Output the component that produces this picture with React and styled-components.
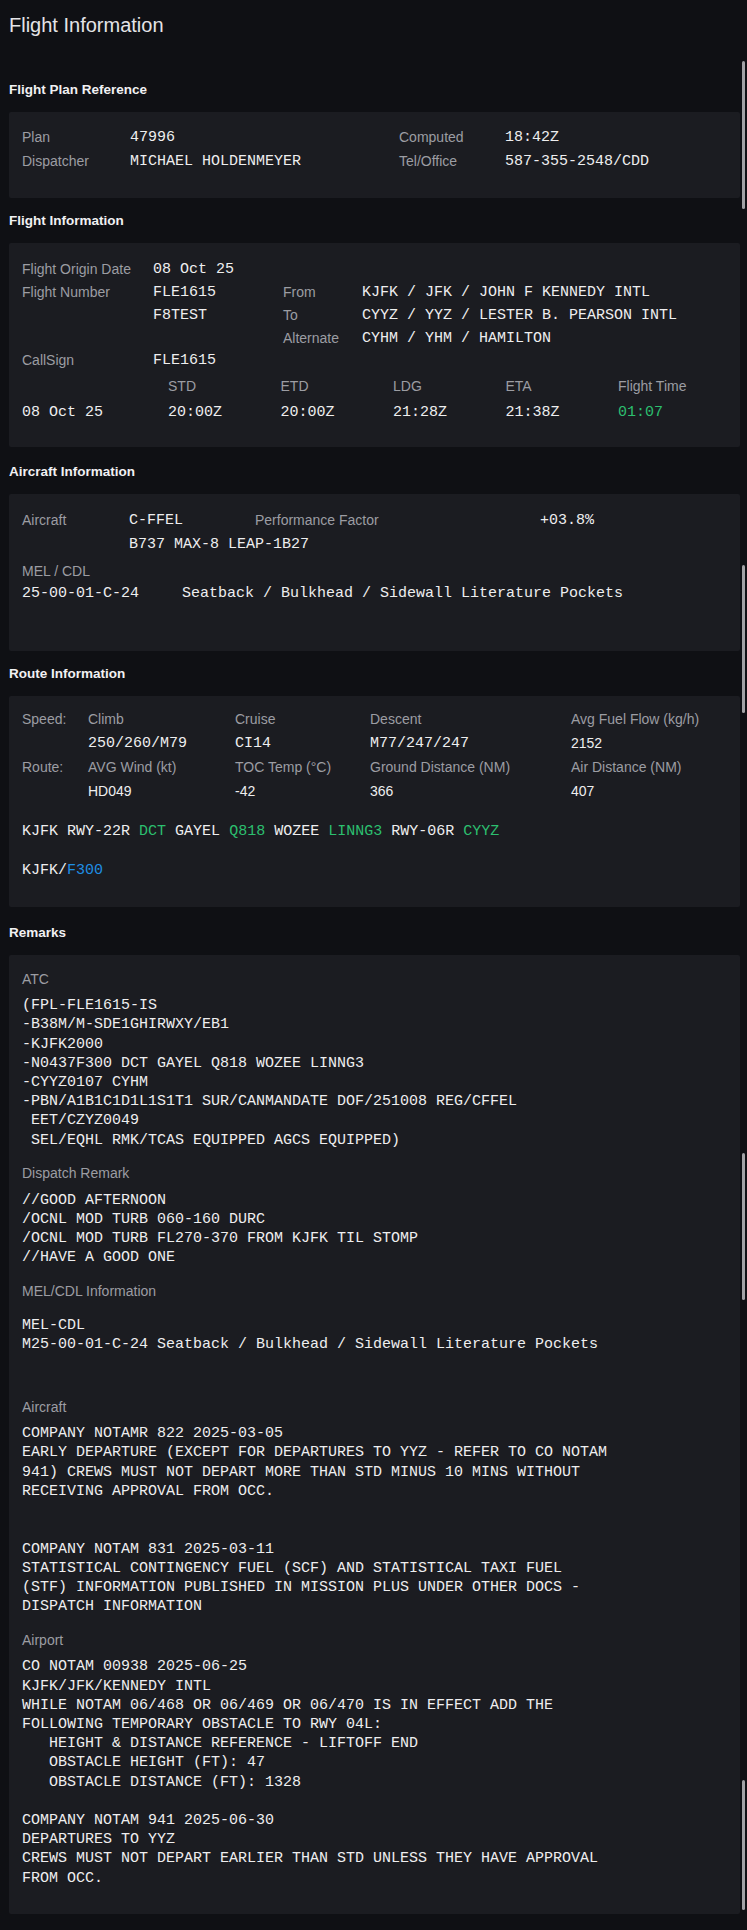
import React from "react";
import styled, { createGlobalStyle } from "styled-components";

const SANS = `"Liberation Sans", Arial, sans-serif`;
const MONO = `"Liberation Mono", "DejaVu Sans Mono", monospace`;

const GlobalStyle = createGlobalStyle`
  html, body {
    margin: 0;
    background: #0f1014;
  }
`;

const atcText = `(FPL-FLE1615-IS
-B38M/M-SDE1GHIRWXY/EB1
-KJFK2000
-N0437F300 DCT GAYEL Q818 WOZEE LINNG3
-CYYZ0107 CYHM
-PBN/A1B1C1D1L1S1T1 SUR/CANMANDATE DOF/251008 REG/CFFEL
 EET/CZYZ0049
 SEL/EQHL RMK/TCAS EQUIPPED AGCS EQUIPPED)`;

const dispatchText = `//GOOD AFTERNOON
/OCNL MOD TURB 060-160 DURC
/OCNL MOD TURB FL270-370 FROM KJFK TIL STOMP
//HAVE A GOOD ONE`;

const melText = `MEL-CDL
M25-00-01-C-24 Seatback / Bulkhead / Sidewall Literature Pockets`;

const aircraftText = `COMPANY NOTAMR 822 2025-03-05
EARLY DEPARTURE (EXCEPT FOR DEPARTURES TO YYZ - REFER TO CO NOTAM
941) CREWS MUST NOT DEPART MORE THAN STD MINUS 10 MINS WITHOUT
RECEIVING APPROVAL FROM OCC.


COMPANY NOTAM 831 2025-03-11
STATISTICAL CONTINGENCY FUEL (SCF) AND STATISTICAL TAXI FUEL
(STF) INFORMATION PUBLISHED IN MISSION PLUS UNDER OTHER DOCS -
DISPATCH INFORMATION`;

const airportText = `CO NOTAM 00938 2025-06-25
KJFK/JFK/KENNEDY INTL
WHILE NOTAM 06/468 OR 06/469 OR 06/470 IS IN EFFECT ADD THE
FOLLOWING TEMPORARY OBSTACLE TO RWY 04L:
   HEIGHT & DISTANCE REFERENCE - LIFTOFF END
   OBSTACLE HEIGHT (FT): 47
   OBSTACLE DISTANCE (FT): 1328

COMPANY NOTAM 941 2025-06-30
DEPARTURES TO YYZ
CREWS MUST NOT DEPART EARLIER THAN STD UNLESS THEY HAVE APPROVAL
FROM OCC.`;

const route = [
  ["KJFK", "plain"],
  ["RWY-22R", "plain"],
  ["DCT", "green"],
  ["GAYEL", "plain"],
  ["Q818", "green"],
  ["WOZEE", "plain"],
  ["LINNG3", "green"],
  ["RWY-06R", "plain"],
  ["CYYZ", "green"],
];

const times = [
  ["STD", "20:00Z"],
  ["ETD", "20:00Z"],
  ["LDG", "21:28Z"],
  ["ETA", "21:38Z"],
  ["Flight Time", "01:07"],
];

// scrollbar thumbs captured in the screenshot
const thumbs = [
  [61, 148],
  [565, 148],
  [1153, 147],
  [1780, 130],
];

const App = () => {
  return (
    <Page>
      <GlobalStyle />
      <Title>Flight Information</Title>

      <Section $top={43}>
        <Heading>Flight Plan Reference</Heading>
        <Card $pad="13px 13px 25px">
          <PlanGrid>
            <Label>Plan</Label>
            <Value>47996</Value>
            <Label>Computed</Label>
            <Value>18:42Z</Value>
            <Label>Dispatcher</Label>
            <Value>MICHAEL HOLDENMEYER</Value>
            <Label>Tel/Office</Label>
            <Value>587-355-2548/CDD</Value>
          </PlanGrid>
        </Card>
      </Section>

      <Section $top={13}>
        <Heading>Flight Information</Heading>
        <Card $pad="15px 13px 22px">
          <InfoGrid>
            <Label>Flight Origin Date</Label>
            <Value>08 Oct 25</Value>
            <span />
            <span />
            <Label>Flight Number</Label>
            <Value>FLE1615</Value>
            <Label>From</Label>
            <Value>KJFK / JFK / JOHN F KENNEDY INTL</Value>
            <span />
            <Value>F8TEST</Value>
            <Label>To</Label>
            <Value>CYYZ / YYZ / LESTER B. PEARSON INTL</Value>
            <span />
            <span />
            <Label>Alternate</Label>
            <Value>CYHM / YHM / HAMILTON</Value>
            <Label>CallSign</Label>
            <Value>FLE1615</Value>
          </InfoGrid>
          <TimeGrid>
            <span />
            {times.map(([l]) => (
              <Label key={l}>{l}</Label>
            ))}
            <Value>08 Oct 25</Value>
            {times.map(([l, v]) => (
              <Value key={l} $tone={l === "Flight Time" ? "green" : "plain"}>
                {v}
              </Value>
            ))}
          </TimeGrid>
        </Card>
      </Section>

      <Section $top={15}>
        <Heading>Aircraft Information</Heading>
        <Card $pad="14px 13px 47px">
          <AircraftGrid>
            <Label>Aircraft</Label>
            <Value>C-FFEL</Value>
            <Label>Performance Factor</Label>
            <Value>+03.8%</Value>
            <span />
            <Value>B737 MAX-8 LEAP-1B27</Value>
          </AircraftGrid>
          <SubLabel>MEL / CDL</SubLabel>
          <MelRow>
            <Value>25-00-01-C-24</Value>
            <Value>Seatback / Bulkhead / Sidewall Literature Pockets</Value>
          </MelRow>
        </Card>
      </Section>

      <Section $top={13}>
        <Heading>Route Information</Heading>
        <Card $pad="11px 13px 26px">
          <RouteGrid>
            <Label>Speed:</Label>
            <Label>Climb</Label>
            <Label>Cruise</Label>
            <Label>Descent</Label>
            <Label>Avg Fuel Flow (kg/h)</Label>
            <span />
            <Value>250/260/M79</Value>
            <Value>CI14</Value>
            <Value>M77/247/247</Value>
            <SansValue>2152</SansValue>
            <Label>Route:</Label>
            <Label>AVG Wind (kt)</Label>
            <Label>TOC Temp (°C)</Label>
            <Label>Ground Distance (NM)</Label>
            <Label>Air Distance (NM)</Label>
            <span />
            <SansValue>HD049</SansValue>
            <SansValue>-42</SansValue>
            <SansValue>366</SansValue>
            <SansValue>407</SansValue>
          </RouteGrid>
          <RouteLine>
            {route.map(([w, tone], i) => (
              <React.Fragment key={i}>
                {i > 0 && " "}
                <Token $tone={tone}>{w}</Token>
              </React.Fragment>
            ))}
          </RouteLine>
          <RouteLine>
            <Token $tone="plain">KJFK/</Token>
            <Token $tone="blue">F300</Token>
          </RouteLine>
        </Card>
      </Section>

      <Section $top={16}>
        <Heading>Remarks</Heading>
        <Card $pad="14px 13px 26px">
          <RemarkLabel $first>ATC</RemarkLabel>
          <Block>{atcText}</Block>
          <RemarkLabel>Dispatch Remark</RemarkLabel>
          <Block>{dispatchText}</Block>
          <RemarkLabel>MEL/CDL Information</RemarkLabel>
          <Block $pad="7.5px 0 28.7px">{melText}</Block>
          <RemarkLabel>Aircraft</RemarkLabel>
          <Block>{aircraftText}</Block>
          <RemarkLabel>Airport</RemarkLabel>
          <Block>{airportText}</Block>
        </Card>
      </Section>

      {thumbs.map(([t, h]) => (
        <Thumb key={t} $top={t} $h={h} />
      ))}
    </Page>
  );
};

export default App;

const tones = {
  plain: "#eeeeef",
  green: "#2cbf6f",
  blue: "#1f8fe3",
};

const Page = styled.div`
  position: relative;
  box-sizing: border-box;
  min-height: 1930px;
  padding: 13px 7px 15px 9px;
  background: #0f1014;
  font-family: ${SANS};
`;
const Title = styled.h1`
  margin: 0;
  font: 400 20px/24px ${SANS};
  color: #e4e4e7;
`;
const Section = styled.section`
  margin-top: ${(p) => p.$top}px;
`;
const Heading = styled.h2`
  margin: 0 0 12px;
  font: 700 13.5px/20px ${SANS};
  color: #f1f1f3;
`;
const Card = styled.div`
  background: #1b1c21;
  border-radius: 2px;
  padding: ${(p) => p.$pad};
`;
const Label = styled.span`
  font: 400 14px/20px ${SANS};
  color: #9c9da3;
  white-space: nowrap;
`;
const Value = styled.span`
  padding-top: 2px;
  font: 400 15px/20px ${MONO};
  color: ${(p) => tones[p.$tone || "plain"]};
  white-space: pre;
`;
const SansValue = styled.span`
  font: 400 14px/20px ${SANS};
  color: #eeeeef;
`;
const PlanGrid = styled.div`
  display: grid;
  grid-template-columns: 108px 269px 106px 1fr;
  grid-auto-rows: 24px;
  align-items: center;
`;
const InfoGrid = styled.div`
  display: grid;
  grid-template-columns: 131px 130px 79px 1fr;
  grid-auto-rows: 22.75px;
  align-items: center;
`;
const TimeGrid = styled.div`
  display: grid;
  grid-template-columns: 146px repeat(5, 112.5px);
  grid-auto-rows: 26px;
  align-items: center;
  margin-top: 1px;
`;
const AircraftGrid = styled.div`
  display: grid;
  grid-template-columns: 107px 126px 285px 1fr;
  grid-auto-rows: 24px;
  align-items: center;
`;
const SubLabel = styled(Label)`
  display: block;
  margin-top: 4px;
  line-height: 22px;
`;
const MelRow = styled.div`
  display: flex;
  gap: 43px;
`;
const RouteGrid = styled.div`
  display: grid;
  grid-template-columns: 66px 147px 135px 201px 1fr;
  grid-auto-rows: 24px;
  align-items: center;
`;
const RouteLine = styled.div`
  margin-top: 19px;
  font: 400 15px/20px ${MONO};
  white-space: pre;
`;
const Token = styled.span`
  color: ${(p) => tones[p.$tone]};
`;
const RemarkLabel = styled.div`
  margin-top: ${(p) => (p.$first ? 0 : 13.5)}px;
  font: 400 14px/20px ${SANS};
  color: #9c9da3;
`;
const Block = styled.pre`
  margin: 7.5px 0 0;
  padding: ${(p) => p.$pad || "0"};
  font: 400 15px/19.2px ${MONO};
  color: #eeeeef;
  white-space: pre;
`;
const Thumb = styled.div`
  position: absolute;
  right: 2px;
  top: ${(p) => p.$top}px;
  width: 3px;
  height: ${(p) => p.$h}px;
  border-radius: 2px;
  background: #a2a2a6;
`;
